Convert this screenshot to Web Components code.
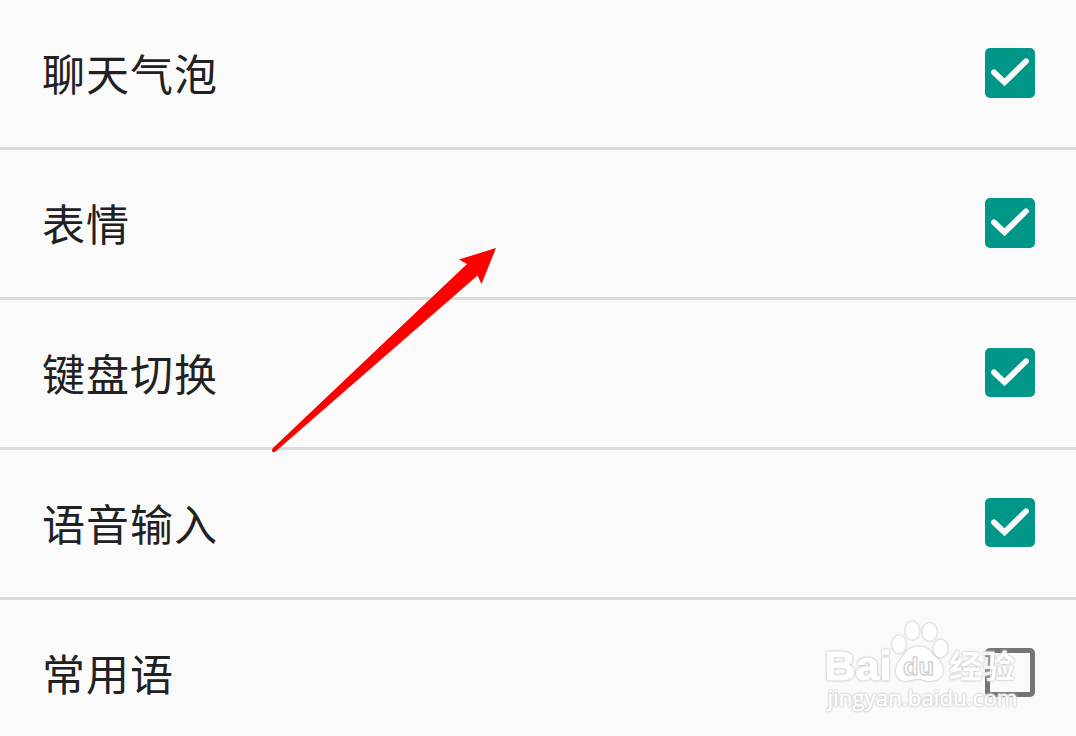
<!DOCTYPE html>
<html lang="zh-CN">
<head>
<meta charset="utf-8">
<title>设置</title>
<style>
html,body{margin:0;height:100%;overflow:hidden;background:#fafafa}
body{font-family:"Noto Sans CJK SC",sans-serif;color:#212121}
</style>
</head>
<body>
<settings-page>
  <setting-row checked>聊天气泡</setting-row>
  <setting-row checked>表情</setting-row>
  <setting-row checked short>键盘切换</setting-row>
  <setting-row checked short>语音输入</setting-row>
  <setting-row short>常用语</setting-row>
  <pointer-arrow slot="overlay"></pointer-arrow>
  <site-watermark slot="overlay"></site-watermark>
</settings-page>
<script>
class SettingsPage extends HTMLElement{
  constructor(){
    super();
    this.attachShadow({mode:'open'}).innerHTML=`<style>
      :host{display:block;position:relative;width:1076px;height:736px;overflow:hidden;background:#fafafa}
      main{display:flex;flex-direction:column}
    </style><main><slot></slot></main><slot name="overlay"></slot>`;
  }
}
class CheckBox extends HTMLElement{
  constructor(){
    super();
    this.attachShadow({mode:'open'}).innerHTML=`<style>
      :host{display:block;box-sizing:border-box;width:50px;height:50px;border-radius:5px;border:5px solid #757575}
      :host([checked]){border:0;background:#009688}
      svg{display:none}
      :host([checked]) svg{display:block}
    </style><svg width="50" height="50" viewBox="0 0 50 50"><path d="M9 24.3 19.5 34.3 41 13.3" fill="none" stroke="#fafafa" stroke-width="5.8" stroke-linecap="round"/></svg>`;
  }
}
class SettingRow extends HTMLElement{
  constructor(){
    super();
    this.attachShadow({mode:'open'}).innerHTML=`<style>
      :host{display:flex;flex:none;box-sizing:border-box;height:150px;justify-content:space-between;align-items:flex-start;padding:0 41px 0 42px;border-bottom:3px solid #dbdbdb}
      .label{font-size:43px;letter-spacing:1px;line-height:64px;padding-top:40px;white-space:nowrap}
      check-box{margin-top:48px}
      :host([short]) check-box{height:49px}
    </style><div class="label"><slot></slot></div><check-box></check-box>`;
    this.shadowRoot.querySelector('check-box').toggleAttribute('checked',this.hasAttribute('checked'));
  }
}
class PointerArrow extends HTMLElement{
  constructor(){
    super();
    this.attachShadow({mode:'open'}).innerHTML=`<style>
      :host{display:block;position:absolute;left:0;top:0}
      svg{display:block}
    </style><svg width="520" height="470"><path d="M496 248 481.5 284 477.5 275.5 275.5 451.5Q273.5 453 272.3 451.5 271.3 450 273 448L467 264 459 259.5Z" fill="#f00"/></svg>`;
  }
}
class SiteWatermark extends HTMLElement{
  constructor(){
    super();
    this.attachShadow({mode:'open'}).innerHTML=`<style>
      :host{display:block;position:absolute;left:810px;top:610px}
      svg{display:block;overflow:visible}
      .o{fill:#fff;filter:drop-shadow(0 0 .8px #b4b4b4) drop-shadow(0 0 .5px #ddd);opacity:.9}
      .latin{font-family:"Liberation Sans",sans-serif;font-weight:bold}
      .heavy{stroke:#fff;stroke-width:1.2}
      .url{font-family:"Open Sans","Noto Sans",sans-serif}
      .cjk{font-family:"Noto Sans CJK SC",sans-serif;font-weight:700}
    </style><svg width="240" height="115">
      <g class="o">
        <text class="latin heavy" x="14.5" y="69.5" font-size="41" textLength="67" lengthAdjust="spacingAndGlyphs">Bai</text>
        <ellipse cx="89" cy="34.3" rx="7" ry="9"/><ellipse cx="102.4" cy="20.5" rx="7" ry="9.3"/>
        <ellipse cx="119.6" cy="22" rx="7.3" ry="9"/><ellipse cx="130.5" cy="38.5" rx="7.2" ry="9"/>
        <path d="M98 40C104 35 113 35 119 40 124 46 131 50 133 58 134 66 128 71 121 71 114 71 112 69 108 69 104 69 100 71 94 71 87 70 84 63 87 56 89 50 94 45 98 40Z"/>
        <text class="cjk" x="139" y="67.5" font-size="32" textLength="66" lengthAdjust="spacingAndGlyphs">经验</text>
        <text class="url" x="17.5" y="96" font-size="21" stroke="#fff" stroke-width=".5" textLength="190" lengthAdjust="spacingAndGlyphs">jingyan.baidu.com</text>
      </g>
      <text class="latin" x="93" y="65" font-size="24" textLength="31" lengthAdjust="spacingAndGlyphs" fill="#fff" stroke="#d3d3d3" stroke-width="1.4">du</text>
    </svg>`;
  }
}
customElements.define('settings-page',SettingsPage);
customElements.define('check-box',CheckBox);
customElements.define('setting-row',SettingRow);
customElements.define('pointer-arrow',PointerArrow);
customElements.define('site-watermark',SiteWatermark);
</script>
</body>
</html>
